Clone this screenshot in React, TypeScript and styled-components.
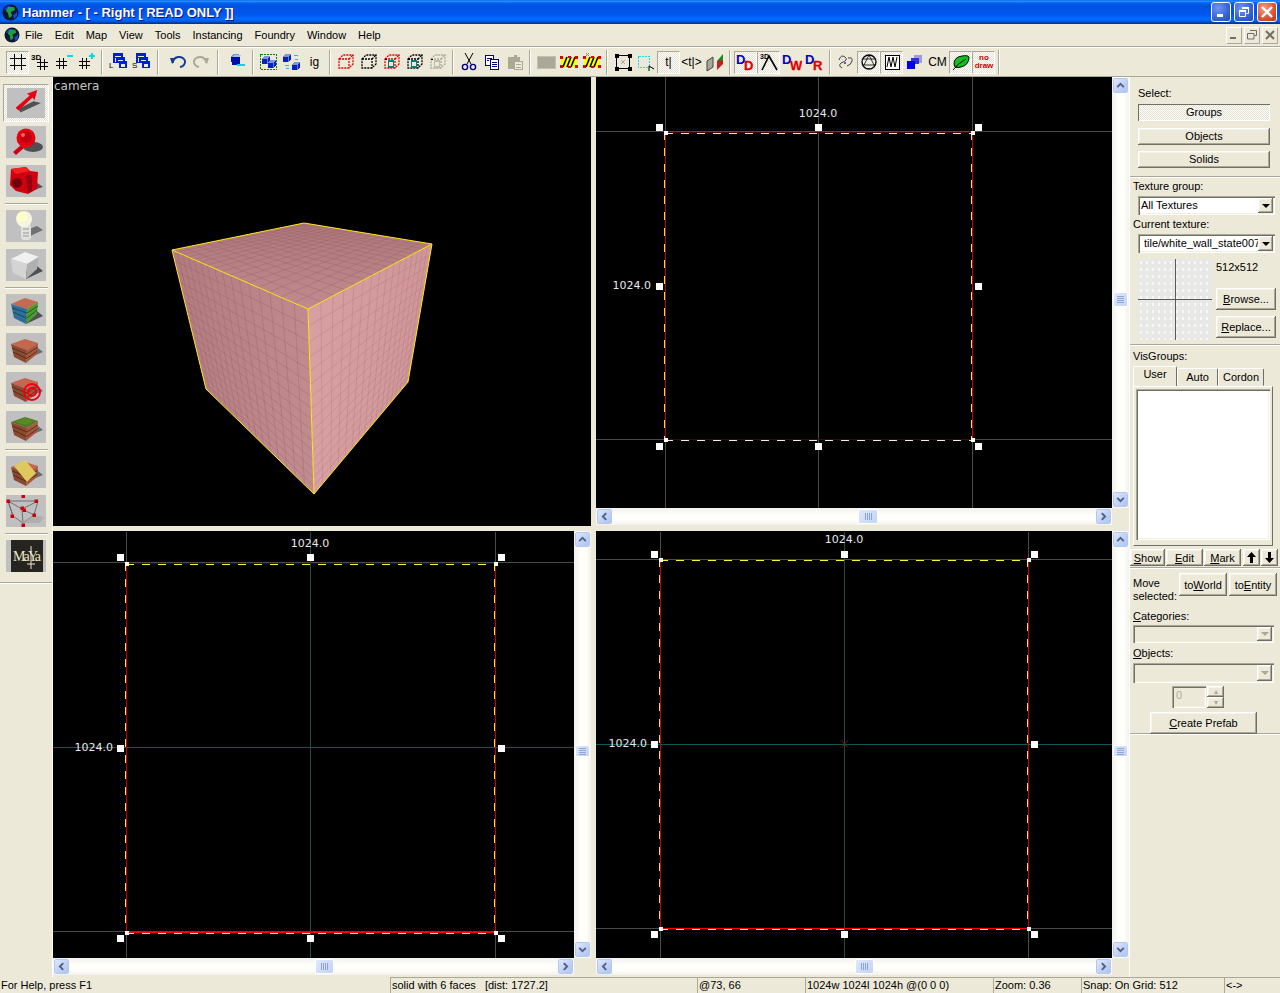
import React from "react";
import styled, { createGlobalStyle, css } from "styled-components";

const Global = createGlobalStyle`
  html, body { margin: 0; padding: 0; background: #ece9d8; }
  body { font-family: "Liberation Sans", Arial, sans-serif; font-size: 11px; color: #000; overflow: hidden; }
  u { text-underline-offset: 1px; }
`;

const checker = css`
  background-color: #f6f4ec;
  background-image: repeating-conic-gradient(#ffffff 0 25%, #e4e1d0 0 50%);
  background-size: 2px 2px;
`;
const raised = css`
  background: #ece9d8;
  box-shadow: inset -1px -1px #716f64, inset 1px 1px #fff, inset -2px -2px #aca899, inset 2px 2px #f5f3ea;
`;
const sunken = css`
  box-shadow: inset 1px 1px #aca899, inset 2px 2px #716f64, inset -1px -1px #fff, inset -2px -2px #f1efe2;
`;

const Window = styled.div`
  width: 1280px; height: 993px; display: flex; flex-direction: column; overflow: hidden; background: #ece9d8;
`;
const TitleBar = styled.div`
  height: 24px; flex: none; display: flex; align-items: center; padding: 0 3px 0 2px; gap: 3px;
  background: linear-gradient(#0058ee 0%, #3593ff 4%, #288eff 6%, #127dff 8%, #036ffc 10%, #0262ee 14%, #0057e5 20%, #0054e3 24%, #0055eb 56%, #005bf5 66%, #026afe 76%, #0062ef 86%, #0052d6 92%, #0040ab 94%, #003092 100%);
`;
const TitleText = styled.div`
  flex: 1; color: #fff; font-weight: bold; font-size: 13px; text-shadow: 1px 1px #0f1089; white-space: nowrap;
`;
const WinButtons = styled.div`display: flex; gap: 3px;`;
const WinButton = styled.div<{ $close?: boolean }>`
  width: 20px; height: 20px; border: 1px solid #fff; border-radius: 3px; box-sizing: border-box;
  display: flex; align-items: center; justify-content: center;
  background: ${p => p.$close
    ? "radial-gradient(circle at 35% 30%, #f0a08a, #dc5a38 55%, #b83018)"
    : "radial-gradient(circle at 35% 30%, #6f96ee, #3a66dc 55%, #1f46b8)"};
`;
const MenuBar = styled.div`
  height: 22px; flex: none; display: flex; align-items: center; padding-left: 4px;
  border-bottom: 1px solid #aca899;
`;
const MenuItem = styled.div`padding: 0 6px; line-height: 16px;`;
const MenuItems = styled.div`display: flex; flex: 1; margin-left: -1px;`;
const MdiButtons = styled.div`display: flex; gap: 2px; padding-right: 2px;`;
const MdiButton = styled.div`
  width: 16px; height: 17px; display: flex; align-items: center; justify-content: center;
  border-right: 1px solid #aca899; border-bottom: 1px solid #aca899; border-top: 1px solid #fff; border-left: 1px solid #fff;
  box-sizing: border-box;
`;
const Toolbar = styled.div`
  height: 30px; flex: none; display: flex; align-items: center; padding-left: 6px;
  box-sizing: border-box; border-top: 1px solid #fff; border-bottom: 1px solid #aca899;
`;
const ToolButton = styled.div<{ $pressed?: boolean }>`
  width: 23px; height: 23px; flex: none; box-sizing: border-box;
  display: flex; align-items: center; justify-content: center;
  font-size: 12px;
  ${p => p.$pressed && css`
    ${checker};
    border: 1px solid; border-color: #aca899 #fff #fff #aca899;
  `}
`;
const ToolSep = styled.div<{ $wide?: boolean }>`
  flex: none; width: ${p => (p.$wide ? 14 : 8)}px; height: 25px; display: flex;
  padding-left: ${p => (p.$wide ? 5 : 3)}px; box-sizing: border-box;
  &::before { content: ""; width: 1px; background: #aca899; border-right: 1px solid #fff; }
`;
const Main = styled.div`
  flex: none; height: 900px; display: flex; 
`;
const ToolColumn = styled.div`
  width: 53px; flex: none; display: flex; flex-direction: column; align-items: center; padding-top: 7px; box-sizing: border-box;
  border-right: 1px solid #fff;
`;
const Tile = styled.div<{ $selected?: boolean }>`
  flex: none; background: #c0c0c0; display: block;
  width: 40px; height: 32px; margin-bottom: 7px;
  ${p => p.$selected && css`
    height: 38px; width: 46px; margin-bottom: 4px; padding: 3px; box-sizing: border-box;
    ${checker};
    border: 1px solid; border-color: #aca899 #fff #fff #aca899;
    svg { background: #c0c0c0; display: block; }
  `}
  svg { display: block; }
`;
const ColumnRule = styled.div`
  width: 43px; height: 1px; background: #aca899; border-bottom: 1px solid #fff; margin: -1px 0 5px; flex: none;
`;
const ColumnEnd = styled.div`
  width: 100%; height: 1px; background: #aca899; border-bottom: 1px solid #fff; margin-top: 3px; flex: none;
`;
const Views = styled.div`
  width: 1076px; flex: none; display: grid; gap: 5px;
  grid-template-columns: 538px 533px; grid-template-rows: 449px 446px;
`;
const Camera = styled.div`
  background: #000; position: relative; overflow: hidden;
  svg { display: block; }
`;
const CameraLabel = styled.div`
  position: absolute; left: 1px; top: 2px; color: #c8c8c8; font: 12px "DejaVu Sans", sans-serif;
`;
const View = styled.div<{ $pad: number }>`
  display: grid; grid-template-columns: 1fr 17px; grid-template-rows: 1fr 17px; padding-bottom: ${p => p.$pad}px; min-height: 0;
`;
const Canvas = styled.div`
  background: #000; overflow: hidden; min-width: 0; min-height: 0;
  svg { display: block; width: 100%; height: 100%; }
`;
const ScrollCorner = styled.div`background: #ece9d8;`;
const Track = styled.div<{ $vertical?: boolean }>`
  display: flex; align-items: center; min-width: 0; min-height: 0; box-sizing: border-box;
  flex-direction: ${p => (p.$vertical ? "column" : "row")};
  padding: 1px;
  background: ${p => p.$vertical
    ? "linear-gradient(90deg, #f3f1ec, #fefefb 40%, #fefefb 70%, #f3f1ec)"
    : "linear-gradient(#f3f1ec, #fefefb 40%, #fefefb 70%, #f3f1ec)"};
`;
const ScrollButton = styled.div`
  width: 15px; height: 15px; flex: none; border-radius: 2px; box-sizing: border-box;
  border: 1px solid #fff; outline: 1px solid #b4c8ee; outline-offset: -1px;
  background: linear-gradient(135deg, #dde8fc, #bfd0f4 60%, #aec4f0);
  display: flex; align-items: center; justify-content: center;
`;
const ScrollThumb = styled.div<{ $vertical?: boolean; $offset: number; $length: number }>`
  flex: none; box-sizing: border-box; border-radius: 2px; border: 1px solid #fff;
  background: linear-gradient(135deg, #dde8fc, #c4d4f6);
  display: flex; align-items: center; justify-content: center;
  ${p => p.$vertical
    ? css`width: 15px; height: ${p.$length}px; margin-top: ${p.$offset}px;`
    : css`height: 15px; width: ${p.$length}px; margin-left: ${p.$offset}px;`}
`;
const ScrollPush = styled.div`flex: 1;`;
const Ridges = styled.div<{ $vertical?: boolean }>`
  width: ${p => (p.$vertical ? 7 : 7)}px; height: 7px;
  background: ${p => p.$vertical
    ? "repeating-linear-gradient(#8ea4d8 0 1px, transparent 1px 2px)"
    : "repeating-linear-gradient(90deg, #8ea4d8 0 1px, transparent 1px 2px)"};
`;

const Panel = styled.div`
  flex: 1; display: flex; flex-direction: column; border-left: 1px solid #fff; min-width: 0;
`;
const PanelSection = styled.div<{ $height: number; $rule?: boolean; $top: number }>`
  height: ${p => p.$height}px; padding-top: ${p => p.$top}px; box-sizing: border-box; flex: none;
  display: flex; flex-direction: column;
  ${p => p.$rule && css`border-bottom: 1px solid #fff; box-shadow: inset 0 -1px #aca899;`}
`;
const FieldLabel = styled.div<{ $left?: number; $top?: number }>`
  line-height: 13px; margin-left: ${p => p.$left ?? 3}px; margin-top: ${p => p.$top ?? 0}px; white-space: nowrap;
`;
const SelectButton = styled.div<{ $pressed?: boolean; $top: number }>`
  margin: ${p => p.$top}px 0 0 8px; width: 132px; height: 17px; text-align: center; line-height: 16px;
  ${p => p.$pressed
    ? css`${checker}; box-shadow: inset 1px 1px #716f64, inset -1px -1px #fff;`
    : raised}
`;
const ComboBox = styled.div<{ $left: number; $width: number; $height: number; $top: number; $disabled?: boolean }>`
  margin: ${p => p.$top}px 0 0 ${p => p.$left}px; width: ${p => p.$width}px; height: ${p => p.$height}px;
  box-sizing: border-box; padding: 2px; display: flex; align-items: stretch;
  background: ${p => (p.$disabled ? "#ece9d8" : "#fff")};
  ${sunken};
`;
const ComboText = styled.div<{ $indent?: number }>`
  flex: 1; line-height: 15px; padding-left: ${p => p.$indent ?? 1}px; overflow: hidden; white-space: nowrap;
`;
const ComboArrow = styled.div<{ $disabled?: boolean }>`
  width: 15px; flex: none; display: flex; align-items: center; justify-content: center;
  ${raised};
  &::after {
    content: ""; border: 4px solid transparent; border-top-color: ${p => (p.$disabled ? "#aca899" : "#000")}; border-bottom: 0;
  }
`;
const PreviewRow = styled.div`display: flex; margin: 6px 0 0 8px; gap: 4px;`;
const Preview = styled.div`
  width: 74px; height: 81px; flex: none; background-color: #e8e8e6;
  background-image:
    linear-gradient(#5a5a58, #5a5a58), linear-gradient(#5a5a58, #5a5a58),
    radial-gradient(ellipse 2px 3px, #f8f8f6 60%, transparent 70%);
  background-size: 1px 100%, 100% 1px, 6px 7px;
  background-position: 37px 0, 0 40px, 0 0;
  background-repeat: no-repeat, no-repeat, repeat;
`;
const PreviewSide = styled.div`display: flex; flex-direction: column;`;
const PushButton = styled.div<{ $width: number; $height: number; $top?: number; $left?: number }>`
  width: ${p => p.$width}px; height: ${p => p.$height}px; flex: none;
  margin-top: ${p => p.$top ?? 0}px; margin-left: ${p => p.$left ?? 0}px;
  display: flex; align-items: center; justify-content: center; white-space: nowrap;
  ${raised};
`;
const TabStrip = styled.div`display: flex; margin: 2px 0 0 3px; align-items: flex-end; height: 21px;`;
const Tab = styled.div<{ $active?: boolean; $width: number }>`
  width: ${p => p.$width}px; box-sizing: border-box; text-align: center;
  border: 1px solid; border-color: #fff #716f64 transparent #fff; border-radius: 2px 2px 0 0;
  height: ${p => (p.$active ? 21 : 18)}px; line-height: ${p => (p.$active ? 15 : 16)}px;
  margin-bottom: ${p => (p.$active ? -1 : 0)}px;
`;
const TabPane = styled.div`
  margin-left: 3px; width: 140px; height: 160px; box-sizing: border-box; padding: 2px 2px 5px 2px;
  border: 1px solid; border-color: #fff #716f64 #716f64 #fff;
`;
const ListBox = styled.div`height: 100%; background: #fff; ${sunken};`;
const RowButtons = styled.div`display: flex; gap: 1px; margin-top: 3px;`;
const MoveRow = styled.div`display: flex; margin: 2px 0 0 3px;`;
const MoveLabel = styled.div`width: 46px; line-height: 13px; margin-top: 4px; flex: none;`;
const SpinRow = styled.div`display: flex; margin: 3px 0 0 42px; gap: 1px;`;
const SpinInput = styled.div`
  width: 34px; height: 22px; box-sizing: border-box; padding: 3px 4px; color: #aca899; ${sunken};
`;
const SpinButtons = styled.div`display: flex; flex-direction: column; width: 17px; height: 22px;`;
const SpinPart = styled.div`
  flex: 1; ${raised}; display: flex; align-items: center; justify-content: center;
  color: #aca899; font-size: 8px; line-height: 8px;
`;
const CenterRow = styled.div`display: flex; margin: 4px 0 0 20px;`;
const StatusBar = styled.div`
  height: 16px; flex: none; display: flex; box-sizing: border-box; background: #ece9d8;
`;
const StatusPane = styled.div<{ $width: number; $plain?: boolean }>`
  width: ${p => p.$width}px; flex: none; box-sizing: border-box; white-space: pre; line-height: 16px; padding-left: ${p => (p.$plain ? 1 : 2)}px;
  ${p => !p.$plain && css`box-shadow: inset 1px 1px #aca899;`}
  overflow: hidden;
`;
const IconText = styled.text`font-family: "Liberation Sans", Arial, sans-serif;`;

/* ---------- small drawings ---------- */

const Glyph: React.FC<{ children: React.ReactNode }> = ({ children }) => (
  <svg width="20" height="20" viewBox="0 0 20 20" shapeRendering="crispEdges">{children}</svg>
);
const Globe = ({ size = 17 }: { size?: number }) => (
  <svg width={size} height={size} viewBox="0 0 17 17">
    <circle cx="8.5" cy="8.5" r="8" fill="#101830" />
    <path d="M2 6 Q5 1 9 2 Q7 5 5 6 Z" fill="#1040d0" />
    <path d="M6 3 L12 3 L13 6 L9 8 L10 12 L7 14 L6 9 L4 7 Z" fill="#1ea040" />
    <path d="M11 11 Q14 10 15 7 L15 12 L12 15 Z" fill="#1848d8" />
  </svg>
);
const Hash = ({ x = 5, y = 5, s = 10 }: { x?: number; y?: number; s?: number }) => (
  <path d={`M${x + s * .3} ${y}v${s}M${x + s * .7} ${y}v${s}M${x} ${y + s * .35}h${s}M${x} ${y + s * .7}h${s}`} stroke="#000" fill="none" />
);
const Stack = ({ letter }: { letter: string }) => (
  <>
    <path d="M6 1.5h8v4h-8zM9 5.5h7v4h-7zM12 9.5h6v6h-6zM6 5.5v5h6" fill="none" stroke="#0020d8" strokeWidth="1.2" />
    <path d="M6 1.5h8v2h-8z M9 5.5h7v2h-7z M12 9.5h6v2h-6z" fill="#0020d8" />
    <IconText x="1" y="16" fontSize="8" fill="#000">{letter}</IconText>
  </>
);
const Cube = ({ x, y, c = "#0a1fc0" }: { x: number; y: number; c?: string }) => (
  <g transform={`translate(${x} ${y})`}>
    <path d="M0 2.5L3 0H8V5.5L5.5 8H0Z" fill={c} />
    <path d="M0 2.5L3 0H8L5.5 2.5Z" fill="#7f95d8" />
    <path d="M5.5 2.5V8" stroke="#c8d4f4" strokeWidth=".5" />
  </g>
);
const DashCube = ({ c, q, inner = "#000" }: { c: string; q?: string; inner?: string }) => (
  <>
    <path d="M3 7L7 3H17V12L13 16H3ZM3 7H13V16M13 7L17 3" fill="none" stroke={c} strokeWidth="1.3" strokeDasharray="2 1" shapeRendering="auto" />
    {q && <rect x="6.5" y="9" width="5" height="6" fill="none" stroke={q} strokeWidth="1.4" />}
    {q && <path d="M3 7h2" stroke={inner} />}
  </>
);
const Hazard = () => (
  <>
    <rect x="2" y="5" width="16" height="10" fill="#ffff00" />
    <path d="M4 15L8 5M8 15L12 5M12 15L16 5" stroke="#000" strokeWidth="1.6" shapeRendering="auto" />
    <path d="M1 4h3v3h-3zM8.5 4h3v2h-3zM16 4h3v3h-3zM1 13h3v3h-3zM16 13h3v3h-3zM8.5 14h3v2h-3z" fill="#e00000" />
  </>
);
const Duo = ({ a, b }: { a: string; b: string }) => (
  <>
    <IconText x="0" y="12" fontSize="13" fontWeight="bold" fill="#0000c8" shapeRendering="auto">{a}</IconText>
    <IconText x="8" y="18" fontSize="13" fontWeight="bold" fill="#e00000" stroke="#e00000" strokeWidth=".3">{b}</IconText>
  </>
);

const Chevron = ({ dir }: { dir: "up" | "down" | "left" | "right" }) => {
  const rot = { up: 0, right: 90, down: 180, left: 270 }[dir];
  return (
    <svg width="9" height="9" viewBox="0 0 9 9">
      <path d="M1.2 6.2L4.5 2.9L7.8 6.2" fill="none" stroke="#4d6185" strokeWidth="1.9" transform={`rotate(${rot} 4.5 4.5)`} />
    </svg>
  );
};

/* ---------- tile pictures of the left column ---------- */

const TileArt: React.FC<{ w?: number; h?: number; children: React.ReactNode }> = ({ w = 40, h = 32, children }) => (
  <svg width={w} height={h} viewBox="0 0 40 32">{children}</svg>
);
const Brick = ({ top = "#c4674e", right = "#a8583f" }: { top?: string; right?: string }) => (
  <>
    <path d="M20 26L37 19L32 15L18 22Z" fill="#505050" opacity=".75" />
    <path d="M5 11L19 6L32 10L21 17Z" fill={top} />
    <path d="M5 11L21 17L20 30L8 24Z" fill="#8a4a30" />
    <path d="M21 17L32 10L31 21L20 30Z" fill={right} />
    <path d="M6 15L21 21M7 19L20.5 25.5M21 21L32 14M20.5 25.5L31.5 18" stroke="#4a2414" strokeWidth=".8" fill="none" />
  </>
);
const LeftTiles = () => (
  <>
    <Tile $selected>
      <TileArt w={38} h={30}>
        <path d="M14 26L36 16L28 14L12 22Z" fill="#505050" />
        <path d="M9 21L24 8L21 6L32 2L29 13L27 10L12 24Z" fill="#e80010" />
      </TileArt>
    </Tile>
    <Tile>
      <TileArt>
        <ellipse cx="27" cy="21" rx="10" ry="5" fill="#505050" />
        <path d="M7 26L15 19L18 22L10 29Z" fill="#d00010" />
        <circle cx="20" cy="12" r="9.5" fill="#e80010" />
        <circle cx="20" cy="11" r="6" fill="#c00010" />
        <circle cx="17" cy="9" r="2" fill="#ff6060" />
      </TileArt>
    </Tile>
    <Tile>
      <TileArt>
        <path d="M18 28L37 22L30 17L16 22Z" fill="#505050" />
        <path d="M5 4L20 2L24 6L32 7L31 24L22 29L10 26L4 20Z" fill="#d00010" />
        <path d="M5 4L20 2L24 6L10 9Z" fill="#f02020" />
        <circle cx="11" cy="18" r="5" fill="#700008" />
        <path d="M20 10L26 10L26 26L22 27Z" fill="#900010" />
      </TileArt>
    </Tile>
    <ColumnRule />
    <Tile>
      <TileArt>
        <path d="M22 27L37 20L31 16L20 20Z" fill="#707070" />
        <rect x="15" y="14" width="10" height="16" rx="3" fill="#e0e0dc" />
        <path d="M17 19h6M17 23h6M17 26h6" stroke="#9a9a96" />
        <circle cx="18" cy="9" r="8" fill="#f6f6e0" />
        <circle cx="16" cy="7" r="5" fill="#ffffc8" />
      </TileArt>
    </Tile>
    <Tile>
      <TileArt>
        <path d="M20 30L37 22L31 17L18 22Z" fill="#505050" />
        <path d="M5 10L19 3L33 8L21 15Z" fill="#f0f0f0" />
        <path d="M5 10L21 15L20 30L7 24Z" fill="#d4d4d4" />
        <path d="M21 15L33 8L31 20L20 30Z" fill="#b0b0b0" />
      </TileArt>
    </Tile>
    <ColumnRule />
    <Tile>
      <TileArt>
        <path d="M20 30L37 22L31 17L18 22Z" fill="#505050" />
        <path d="M5 10L19 4L32 8L21 15Z" fill="#c46a50" />
        <path d="M5 10L21 15L20 30L8 24Z" fill="#2c6ea0" />
        <path d="M21 15L32 8L31 20L20 30Z" fill="#4c9c34" />
        <path d="M6 14L21 19M7 18L20 24M21 19L32 12M21 24L31 16" stroke="#163c18" fill="none" strokeWidth=".7" />
      </TileArt>
    </Tile>
    <Tile><TileArt><Brick /></TileArt></Tile>
    <Tile>
      <TileArt>
        <Brick />
        <circle cx="26" cy="20" r="8" fill="none" stroke="#f00010" strokeWidth="2" />
        <circle cx="26" cy="20" r="4" fill="none" stroke="#f00010" strokeWidth="2" />
      </TileArt>
    </Tile>
    <Tile>
      <TileArt>
        <Brick top="#4e7a2a" />
        <path d="M9 11L19 7L28 10L21 14Z" fill="#5a8a22" />
      </TileArt>
    </Tile>
    <ColumnRule />
    <Tile>
      <TileArt>
        <Brick />
        <path d="M8 10L19 4L30 17L21 26Z" fill="#e0c860" />
      </TileArt>
    </Tile>
    <Tile>
      <TileArt>
        <path d="M2 6H22L32 6L28 20L17 28L7 21Z M16 14L32 6M16 14L28 20M16 14L17 28M16 14L2 6M7 21L2 6" fill="none" stroke="#707070" />
        <path d="M14 28L34 28L38 22L28 20Z" fill="#a8a8a8" opacity=".7" />
        {[[2, 6], [17, 1], [30, 6], [16, 13], [18, 15], [6, 21], [28, 20], [17, 30]].map(([x, y]) => (
          <rect key={`${x}-${y}`} x={x - 1.5} y={y - 1.5} width="3.5" height="3.5" fill="#c80010" />
        ))}
      </TileArt>
    </Tile>
    <ColumnRule />
    <Tile>
      <TileArt>
        <rect x="5" y="0" width="32" height="32" fill="#262420" />
        <text x="7" y="21" fontFamily="'Liberation Serif', serif" fontSize="14" fill="#efe9c8" textLength="28">MaYa</text>
        <path d="M25 6V29M21 24H29" stroke="#efe9c8" fill="none" />
      </TileArt>
    </Tile>
    <ColumnEnd />
  </>
);

/* ---------- views ---------- */

type Pt = [number, number];

function squareToQuad(q: [Pt, Pt, Pt, Pt]) {
  const [[x0, y0], [x1, y1], [x2, y2], [x3, y3]] = q;
  const dx1 = x1 - x2, dx2 = x3 - x2, sx = x0 - x1 + x2 - x3;
  const dy1 = y1 - y2, dy2 = y3 - y2, sy = y0 - y1 + y2 - y3;
  const den = dx1 * dy2 - dx2 * dy1;
  const g = (sx * dy2 - dx2 * sy) / den;
  const h = (dx1 * sy - sx * dy1) / den;
  const a = x1 - x0 + g * x1, b = x3 - x0 + h * x3, d = y1 - y0 + g * y1, e = y3 - y0 + h * y3;
  return (u: number, v: number): Pt => {
    const w = g * u + h * v + 1;
    return [(a * u + b * v + x0) / w, (d * u + e * v + y0) / w];
  };
}
function tileLines(q: [Pt, Pt, Pt, Pt], n: number) {
  const map = squareToQuad(q);
  let d = "";
  for (let i = 1; i < n; i++) {
    const t = i / n;
    const [a, b] = map(t, 0), [c, e] = map(t, 1), [f, g] = map(0, t), [h, k] = map(1, t);
    d += `M${a.toFixed(1)} ${b.toFixed(1)}L${c.toFixed(1)} ${e.toFixed(1)}M${f.toFixed(1)} ${g.toFixed(1)}L${h.toFixed(1)} ${k.toFixed(1)}`;
  }
  return d;
}
const A: Pt = [173, 250], B: Pt = [305, 223], C: Pt = [433, 244], D: Pt = [309, 309], E: Pt = [315, 494], F: Pt = [207, 389], G: Pt = [409, 382];
const poly = (...p: Pt[]) => p.map(v => v.join(",")).join(" ");

const CubeScene = () => (
  <svg width="538" height="449" viewBox="54 77 538 449">
    <defs>
      <linearGradient id="faceLeft" x1="0" y1="0" x2="1" y2="0.2">
        <stop offset="0" stopColor="#b27a7f" /><stop offset="1" stopColor="#c08a8e" />
      </linearGradient>
      <linearGradient id="faceRight" x1="0" y1="0" x2="1" y2="0">
        <stop offset="0" stopColor="#d9a0a3" /><stop offset="1" stopColor="#cf9598" />
      </linearGradient>
      <linearGradient id="faceTop" x1="0" y1="0" x2="0" y2="1">
        <stop offset="0" stopColor="#ad777b" /><stop offset="1" stopColor="#c08a8e" />
      </linearGradient>
    </defs>
    <polygon points={poly(A, B, C, D)} fill="url(#faceTop)" />
    <polygon points={poly(A, D, E, F)} fill="url(#faceLeft)" />
    <polygon points={poly(D, C, G, E)} fill="url(#faceRight)" />
    <path d={tileLines([A, B, C, D], 16)} stroke="#8e5c60" strokeWidth=".5" opacity=".55" fill="none" />
    <path d={tileLines([A, D, E, F], 16)} stroke="#8e5c60" strokeWidth=".5" opacity=".6" fill="none" />
    <path d={tileLines([D, C, G, E], 16)} stroke="#a06e72" strokeWidth=".5" opacity=".6" fill="none" />
    <path d={`M${A}L${B}L${C}L${D}ZM${D}L${E}M${C}L${G}L${E}L${F}L${A}`} fill="none" stroke="#ffea10" strokeWidth="1" />
  </svg>
);

type Edge = { x1: number; y1: number; x2: number; y2: number; base: string; dash: string };
type Scene = {
  x: number; y: number; w: number; h: number;
  vlines: number[]; hlines: number[]; vmid?: number; hmid?: number;
  box: [number, number, number, number];
  edges: Edge[];
  handles: Pt[];
  labels: { x: number; y: number; anchor: "middle" | "end" }[];
  mark?: Pt;
};

const edgesOf = (l: number, t: number, r: number, b: number, top: [string, string], bottom: [string, string]): Edge[] => [
  { x1: l, y1: t, x2: r, y2: t, base: top[0], dash: top[1] },
  { x1: l, y1: b, x2: r, y2: b, base: bottom[0], dash: bottom[1] },
  { x1: l, y1: t, x2: l, y2: b, base: "#c80000", dash: "#ffe050" },
  { x1: r, y1: t, x2: r, y2: b, base: "#c80000", dash: "#ffe050" },
];
const handlesOf = (xs: number[], ys: number[]): Pt[] => [
  [xs[0], ys[0]], [xs[1], ys[0]], [xs[2], ys[0]],
  [xs[0], ys[1]], [xs[2], ys[1]],
  [xs[0], ys[2]], [xs[1], ys[2]], [xs[2], ys[2]],
];
const RY: [string, string] = ["#ff0000", "#ffff30"];

const scenes: Record<string, Scene> = {
  right: {
    x: 597, y: 77, w: 516, h: 431,
    vlines: [666, 973], hlines: [131, 439], vmid: 819,
    box: [666, 132, 973, 439],
    edges: edgesOf(666, 132, 973, 439, ["#400000", "#ffff30"], ["#500000", "#f0f0e0"]),
    handles: handlesOf([660, 819, 979], [127, 286, 446]),
    labels: [{ x: 819, y: 117, anchor: "middle" }, { x: 652, y: 289, anchor: "end" }],
  },
  left: {
    x: 54, y: 531, w: 521, h: 426,
    vlines: [127, 496], hlines: [561, 930], vmid: 311, hmid: 746,
    box: [127, 562, 496, 931],
    edges: edgesOf(127, 562, 496, 931, ["#400000", "#ffff30"], RY),
    handles: handlesOf([121, 311, 502], [556, 747, 937]),
    labels: [{ x: 311, y: 546, anchor: "middle" }, { x: 114, y: 750, anchor: "end" }],
  },
  bottom: {
    x: 597, y: 531, w: 516, h: 426,
    vlines: [661, 1029], hlines: [558, 927], vmid: 845, hmid: 743,
    box: [661, 558, 1029, 927],
    edges: edgesOf(661, 558, 1029, 927, RY, RY),
    handles: handlesOf([655, 845, 1035], [553, 743, 933]),
    labels: [{ x: 845, y: 542, anchor: "middle" }, { x: 648, y: 746, anchor: "end" }],
    mark: [845, 743],
  },
};

const GridSvgLabel = styled.text`
  font-family: "DejaVu Sans", sans-serif; font-size: 11px; fill: #e8e8e8;
`;

const Grid2D = ({ s }: { s: Scene }) => {
  const right = s.x + s.w, bottom = s.y + s.h;
  const [l, t, r, b] = s.box;
  return (
    <svg viewBox={`${s.x} ${s.y} ${s.w} ${s.h}`} shapeRendering="crispEdges">
      {s.vlines.map(v => <line key={v} x1={v + .5} x2={v + .5} y1={s.y} y2={bottom} stroke="#4a4a4a" />)}
      {s.hlines.map(v => <line key={v} y1={v + .5} y2={v + .5} x1={s.x} x2={right} stroke="#4a4a4a" />)}
      {s.vmid && <line x1={s.vmid + .5} x2={s.vmid + .5} y1={s.y} y2={bottom} stroke={s.hmid ? "#254a4a" : "#4a4a4a"} />}
      {s.hmid && <line y1={s.hmid + .5} y2={s.hmid + .5} x1={s.x} x2={right} stroke="#0a5a5a" />}
      {s.edges.map((e, i) => {
        const horizontal = e.y1 === e.y2;
        return (
          <g key={i}>
            <line x1={e.x1 + .5} y1={e.y1 + .5} x2={e.x2 + .5} y2={e.y2 + .5} stroke={e.base} />
            <line
              x1={e.x1 + (horizontal ? 0 : -.5)} y1={e.y1 + (horizontal ? 1.5 : 0)}
              x2={e.x2 + (horizontal ? 0 : -.5)} y2={e.y2 + (horizontal ? 1.5 : 0)}
              stroke={e.dash} strokeDasharray="8 8"
            />
          </g>
        );
      })}
      {[[l, t], [r, t], [l, b], [r, b]].map(([x, y]) => (
        <rect key={`${x}-${y}`} x={x - 1} y={y - 1} width="4" height="4" fill="#fff" />
      ))}
      {s.handles.map(([x, y]) => <rect key={`${x}-${y}`} x={x - 3} y={y - 3} width="7" height="7" fill="#fff" />)}
      {s.mark && <path d={`M${s.mark[0] - 3} ${s.mark[1] - 3}l7 7m0 -7l-7 7`} stroke="#801818" shapeRendering="auto" />}
      {s.labels.map(p => <GridSvgLabel key={p.x} x={p.x} y={p.y} textAnchor={p.anchor} shapeRendering="auto">1024.0</GridSvgLabel>)}
    </svg>
  );
};

const VScroll = ({ offset, length }: { offset: number; length: number }) => (
  <Track $vertical>
    <ScrollButton><Chevron dir="up" /></ScrollButton>
    <ScrollThumb $vertical $offset={offset} $length={length}><Ridges $vertical /></ScrollThumb>
    <ScrollPush />
    <ScrollButton><Chevron dir="down" /></ScrollButton>
  </Track>
);
const HScroll = ({ offset, length }: { offset: number; length: number }) => (
  <Track>
    <ScrollButton><Chevron dir="left" /></ScrollButton>
    <ScrollThumb $offset={offset} $length={length}><Ridges /></ScrollThumb>
    <ScrollPush />
    <ScrollButton><Chevron dir="right" /></ScrollButton>
  </Track>
);

const View2D = ({ s, pad, v, h }: { s: Scene; pad: number; v: [number, number]; h: [number, number] }) => (
  <View $pad={pad}>
    <Canvas><Grid2D s={s} /></Canvas>
    <VScroll offset={v[0]} length={v[1]} />
    <HScroll offset={h[0]} length={h[1]} />
    <ScrollCorner />
  </View>
);

/* ---------- top toolbar ---------- */

const TopTools = () => (
  <Toolbar>
    <ToolButton $pressed><Glyph><path d="M6 2v16M13 2v16M2 6h16M2 13h16" stroke="#000" fill="none" /></Glyph></ToolButton>
    <ToolButton><Glyph><IconText x="0" y="8" fontSize="8" fontWeight="bold">3D</IconText><Hash x={6} y={7} s={11} /></Glyph></ToolButton>
    <ToolButton><Glyph><Hash x={2} y={6} s={11} /><rect x="13" y="3" width="6" height="2" fill="#10d8e0" /></Glyph></ToolButton>
    <ToolButton><Glyph><Hash x={2} y={6} s={11} /><path d="M12 4h6M15 1v6" stroke="#10d8e0" strokeWidth="2" /></Glyph></ToolButton>
    <ToolSep />
    <ToolButton><Glyph><Stack letter="L" /></Glyph></ToolButton>
    <ToolButton><Glyph><Stack letter="S" /></Glyph></ToolButton>
    <ToolSep $wide />
    <ToolButton><Glyph><path d="M5 11A6 5 0 1 1 12 15" fill="none" stroke="#1a3c90" strokeWidth="2" shapeRendering="auto" /><path d="M2 6L8 6L4 12Z" fill="#1a3c90" shapeRendering="auto" /></Glyph></ToolButton>
    <ToolButton><Glyph><path d="M15 11A6 5 0 1 0 8 15" fill="none" stroke="#aca899" strokeWidth="2" shapeRendering="auto" /><path d="M18 6L12 6L16 12Z" fill="#aca899" shapeRendering="auto" /></Glyph></ToolButton>
    <ToolSep $wide />
    <ToolButton><Glyph><Cube x={3} y={2} c="#0010a0" /><path d="M4 5h8v8h-8z" fill="#0010a8" /><path d="M6 3h7l-2 2h-7z" fill="#a8c4e8" /><path d="M9 13h8" stroke="#10d0e0" strokeWidth="2" /></Glyph></ToolButton>
    <ToolSep />
    <ToolButton><Glyph><path d="M1.5 2.5h16v15h-16z" fill="none" stroke="#008000" strokeDasharray="2 1" /><Cube x={3} y={4} /><Cube x={9} y={8} /></Glyph></ToolButton>
    <ToolButton><Glyph><Cube x={1} y={2} /><Cube x={10} y={10} /><path d="M12 4l4-1M13 7l3 1M3 14l4-1M4 17l3-1" stroke="#10c8d8" /></Glyph></ToolButton>
    <ToolButton>ig</ToolButton>
    <ToolSep />
    <ToolButton><Glyph><DashCube c="#e00000" /></Glyph></ToolButton>
    <ToolButton><Glyph><DashCube c="#000" /></Glyph></ToolButton>
    <ToolButton><Glyph><DashCube c="#e00000" q="#008080" /></Glyph></ToolButton>
    <ToolButton><Glyph><DashCube c="#000" q="#008080" /></Glyph></ToolButton>
    <ToolButton><Glyph><DashCube c="#aca899" q="#c0bcaa" /></Glyph></ToolButton>
    <ToolSep />
    <ToolButton><Glyph><path d="M6 1L12 12M14 1L8 12" stroke="#000" shapeRendering="auto" fill="none" /><circle cx="6" cy="15" r="2.6" fill="none" stroke="#000080" strokeWidth="1.4" shapeRendering="auto" /><circle cx="14" cy="15" r="2.6" fill="none" stroke="#000080" strokeWidth="1.4" shapeRendering="auto" /></Glyph></ToolButton>
    <ToolButton><Glyph><path d="M3.5 3.5h8v10h-8z" fill="#fff" stroke="#000080" /><path d="M8.5 7.5h8v10h-8z" fill="#fff" stroke="#000080" /><path d="M5 6h5M5 8h2M10 10h5M10 12h5M10 14h5" stroke="#000080" /></Glyph></ToolButton>
    <ToolButton><Glyph><path d="M3 5h6v-2h3v2h3v8h-3v4h-9z" fill="#aca899" /><path d="M9.5 9.5h8v8h-8z" fill="#ece9d8" stroke="#aca899" /><path d="M11 12h5M11 15h5" stroke="#aca899" /></Glyph></ToolButton>
    <ToolSep />
    <ToolButton><Glyph><rect x="1" y="4" width="18" height="12" fill="#aca899" stroke="#c4c0b0" /></Glyph></ToolButton>
    <ToolButton><Glyph><Hazard /></Glyph></ToolButton>
    <ToolButton><Glyph><Hazard /><path d="M4 1l3 3M7 1l-3 3" stroke="#8a8878" /></Glyph></ToolButton>
    <ToolSep />
    <ToolButton><Glyph><path d="M3.5 3.5h13v13h-13z" fill="none" stroke="#000" /><path d="M2 2h3v3h-3zM15 2h3v3h-3zM2 15h3v3h-3zM15 15h3v3h-3z" fill="#000" stroke="#000" /><path d="M8 8l4 4M12 8l-4 4" stroke="#aca899" shapeRendering="auto" /></Glyph></ToolButton>
    <ToolButton><Glyph><path d="M2.5 4.5h11v11h-11z" fill="none" stroke="#10e0f0" strokeDasharray="2 1" /><path d="M13 14l5 3M13 14v5" stroke="#000" shapeRendering="auto" /></Glyph></ToolButton>
    <ToolButton $pressed>t|</ToolButton>
    <ToolButton>&lt;t|&gt;</ToolButton>
    <ToolButton><Glyph><path d="M2 9L8 5V15L2 19Z" fill="#aca899" stroke="#404040" shapeRendering="auto" /><path d="M12 9L18 2V10L12 15Z" fill="#109020" shapeRendering="auto" /><path d="M12 9L18 8V12L12 18Z" fill="#c02020" shapeRendering="auto" /></Glyph></ToolButton>
    <ToolSep />
    <ToolButton $pressed><Glyph><Duo a="D" b="D" /></Glyph></ToolButton>
    <ToolButton $pressed><Glyph><IconText x="1" y="7" fontSize="7" fontWeight="bold">3D</IconText><path d="M3 18L10 4L18 18" fill="none" stroke="#000" strokeWidth="1.6" shapeRendering="auto" /></Glyph></ToolButton>
    <ToolButton><Glyph><Duo a="D" b="W" /></Glyph></ToolButton>
    <ToolButton><Glyph><Duo a="D" b="R" /></Glyph></ToolButton>
    <ToolSep />
    <ToolButton><Glyph><path d="M3 8Q5 2 9 5T5 11Q2 14 6 16M12 6Q17 5 16 9T11 14" fill="none" stroke="#404040" shapeRendering="auto" /><rect x="8" y="10" width="2" height="2" fill="#a040c0" /></Glyph></ToolButton>
    <ToolButton $pressed><Glyph><circle cx="10" cy="10" r="7" fill="none" stroke="#000" strokeWidth="1.3" shapeRendering="auto" /><path d="M4 7h12M4 13h12M10 3L5 13M10 3L15 13" stroke="#000" strokeWidth=".8" fill="none" shapeRendering="auto" /></Glyph></ToolButton>
    <ToolButton $pressed><Glyph><rect x="3" y="3" width="14" height="14" fill="#fff" stroke="#000" /><path d="M5 15L7 5L9 15L11 5L13 15L15 5" fill="none" stroke="#000" shapeRendering="auto" /></Glyph></ToolButton>
    <ToolButton><Glyph><rect x="9" y="3" width="8" height="8" fill="#a0a0d0" /><rect x="6" y="6" width="8" height="6" fill="#3030e0" /><rect x="2" y="9" width="8" height="8" fill="#0000f0" /></Glyph></ToolButton>
    <ToolButton>CM</ToolButton>
    <ToolButton $pressed><Glyph><path d="M3 12Q3 5 11 4Q17 3 18 5Q18 13 10 15Q7 16 4 15Z" fill="#10c020" stroke="#000" shapeRendering="auto" /><path d="M2 18Q6 12 15 7" stroke="#000" fill="none" shapeRendering="auto" /></Glyph></ToolButton>
    <ToolButton $pressed><Glyph>
      <IconText x="10" y="8" fontSize="8" fontWeight="bold" textAnchor="middle" fill="#d00000">no</IconText>
      <IconText x="10" y="16" fontSize="8" fontWeight="bold" textAnchor="middle" fill="#d00000">draw</IconText>
    </Glyph></ToolButton>
    <ToolSep />
  </Toolbar>
);

/* ---------- right panel ---------- */

const RightPanel = () => (
  <Panel>
    <PanelSection $height={101} $top={10} $rule>
      <FieldLabel $left={8}>Select:</FieldLabel>
      <SelectButton $pressed $top={4}>Groups</SelectButton>
      <SelectButton $top={7}>Objects</SelectButton>
      <SelectButton $top={6}>Solids</SelectButton>
    </PanelSection>
    <PanelSection $height={168} $top={2} $rule>
      <FieldLabel>Texture group:</FieldLabel>
      <ComboBox $left={8} $width={137} $height={19} $top={3}>
        <ComboText>All Textures</ComboText><ComboArrow />
      </ComboBox>
      <FieldLabel $top={3}>Current texture:</FieldLabel>
      <ComboBox $left={8} $width={137} $height={19} $top={3}>
        <ComboText $indent={4}>tile/white_wall_state007</ComboText><ComboArrow />
      </ComboBox>
      <PreviewRow>
        <Preview />
        <PreviewSide>
          <FieldLabel $left={0} $top={2}>512x512</FieldLabel>
          <PushButton $width={60} $height={22} $top={14}><span><u>B</u>rowse...</span></PushButton>
          <PushButton $width={60} $height={22} $top={6}><span><u>R</u>eplace...</span></PushButton>
        </PreviewSide>
      </PreviewRow>
    </PanelSection>
    <PanelSection $height={223} $top={4} $rule>
      <FieldLabel>VisGroups:</FieldLabel>
      <TabStrip>
        <Tab $active $width={44}>User</Tab>
        <Tab $width={41}>Auto</Tab>
        <Tab $width={46}>Cordon</Tab>
      </TabStrip>
      <TabPane><ListBox /></TabPane>
      <RowButtons>
        <PushButton $width={35} $height={17}><span><u>S</u>how</span></PushButton>
        <PushButton $width={37} $height={17}><span><u>E</u>dit</span></PushButton>
        <PushButton $width={37} $height={17}><span><u>M</u>ark</span></PushButton>
        <PushButton $width={17} $height={17} $left={1}><svg width="11" height="11" viewBox="0 0 11 11"><path d="M5.5 0L10 5H7V11H4V5H1Z" /></svg></PushButton>
        <PushButton $width={17} $height={17}><svg width="11" height="11" viewBox="0 0 11 11"><path d="M5.5 11L10 6H7V0H4V6H1Z" /></svg></PushButton>
      </RowButtons>
    </PanelSection>
    <PanelSection $height={166} $top={2} $rule>
      <MoveRow>
        <MoveLabel>Move<br />selected:</MoveLabel>
        <PushButton $width={48} $height={23}><span>to<u>W</u>orld</span></PushButton>
        <PushButton $width={48} $height={23} $left={2}><span>to<u>E</u>ntity</span></PushButton>
      </MoveRow>
      <FieldLabel $top={7}><u>C</u>ategories:</FieldLabel>
      <ComboBox $left={3} $width={141} $height={20} $top={2} $disabled>
        <ComboText /><ComboArrow $disabled />
      </ComboBox>
      <FieldLabel $top={4}><u>O</u>bjects:</FieldLabel>
      <ComboBox $left={3} $width={141} $height={22} $top={3} $disabled>
        <ComboText /><ComboArrow $disabled />
      </ComboBox>
      <SpinRow>
        <SpinInput>0</SpinInput>
        <SpinButtons><SpinPart>▴</SpinPart><SpinPart>▾</SpinPart></SpinButtons>
      </SpinRow>
      <CenterRow>
        <PushButton $width={107} $height={22}><span><u>C</u>reate Prefab</span></PushButton>
      </CenterRow>
    </PanelSection>
  </Panel>
);

export default function App() {
  return (
    <Window>
      <Global />
      <TitleBar>
        <Globe />
        <TitleText>Hammer - [ - Right [ READ ONLY ]]</TitleText>
        <WinButtons>
          <WinButton><svg width="12" height="12" viewBox="0 0 12 12"><rect x="2" y="8" width="6" height="3" fill="#fff" /></svg></WinButton>
          <WinButton><svg width="12" height="12" viewBox="0 0 12 12"><path d="M4.5 1.5h6v6h-2M1.5 4.5h6v6h-6z" stroke="#fff" fill="none" /><path d="M1 4h7v2h-7zM4 1h7v2h-7z" fill="#fff" /></svg></WinButton>
          <WinButton $close><svg width="14" height="14" viewBox="0 0 14 14"><path d="M2 2L12 12M12 2L2 12" stroke="#fff" strokeWidth="2.4" /></svg></WinButton>
        </WinButtons>
      </TitleBar>
      <MenuBar>
        <Globe size={16} />
        <MenuItems>
          {["File", "Edit", "Map", "View", "Tools", "Instancing", "Foundry", "Window", "Help"].map(m => <MenuItem key={m}>{m}</MenuItem>)}
        </MenuItems>
        <MdiButtons>
          <MdiButton><svg width="10" height="10" viewBox="0 0 10 10"><rect x="1" y="7" width="6" height="2" fill="#716f64" /></svg></MdiButton>
          <MdiButton><svg width="10" height="10" viewBox="0 0 10 10"><path d="M3 .5h6.500v5h-2M.5 3.5h6.500v5.500h-6.500z" stroke="#716f64" fill="none" /></svg></MdiButton>
          <MdiButton><svg width="10" height="10" viewBox="0 0 10 10"><path d="M1 1L9 9M9 1L1 9" stroke="#716f64" strokeWidth="2" /></svg></MdiButton>
        </MdiButtons>
      </MenuBar>
      <TopTools />
      <Main>
        <ToolColumn><LeftTiles /></ToolColumn>
        <Views>
          <Camera>
            <CubeScene />
            <CameraLabel>camera</CameraLabel>
          </Camera>
          <View2D s={scenes.right} pad={1} v={[199, 15]} h={[246, 20]} />
          <View2D s={scenes.left} pad={2} v={[198, 12]} h={[246, 19]} />
          <View2D s={scenes.bottom} pad={2} v={[198, 12]} h={[243, 19]} />
        </Views>
        <RightPanel />
      </Main>
      <StatusBar>
        <StatusPane $width={390} $plain>For Help, press F1</StatusPane>
        <StatusPane $width={307}>solid with 6 faces   [dist: 1727.2]</StatusPane>
        <StatusPane $width={108}>@73, 66</StatusPane>
        <StatusPane $width={188}>1024w 1024l 1024h @(0 0 0)</StatusPane>
        <StatusPane $width={88}>Zoom: 0.36</StatusPane>
        <StatusPane $width={143}>Snap: On Grid: 512</StatusPane>
        <StatusPane $width={56}>{"<->"}</StatusPane>
      </StatusBar>
    </Window>
  );
}
